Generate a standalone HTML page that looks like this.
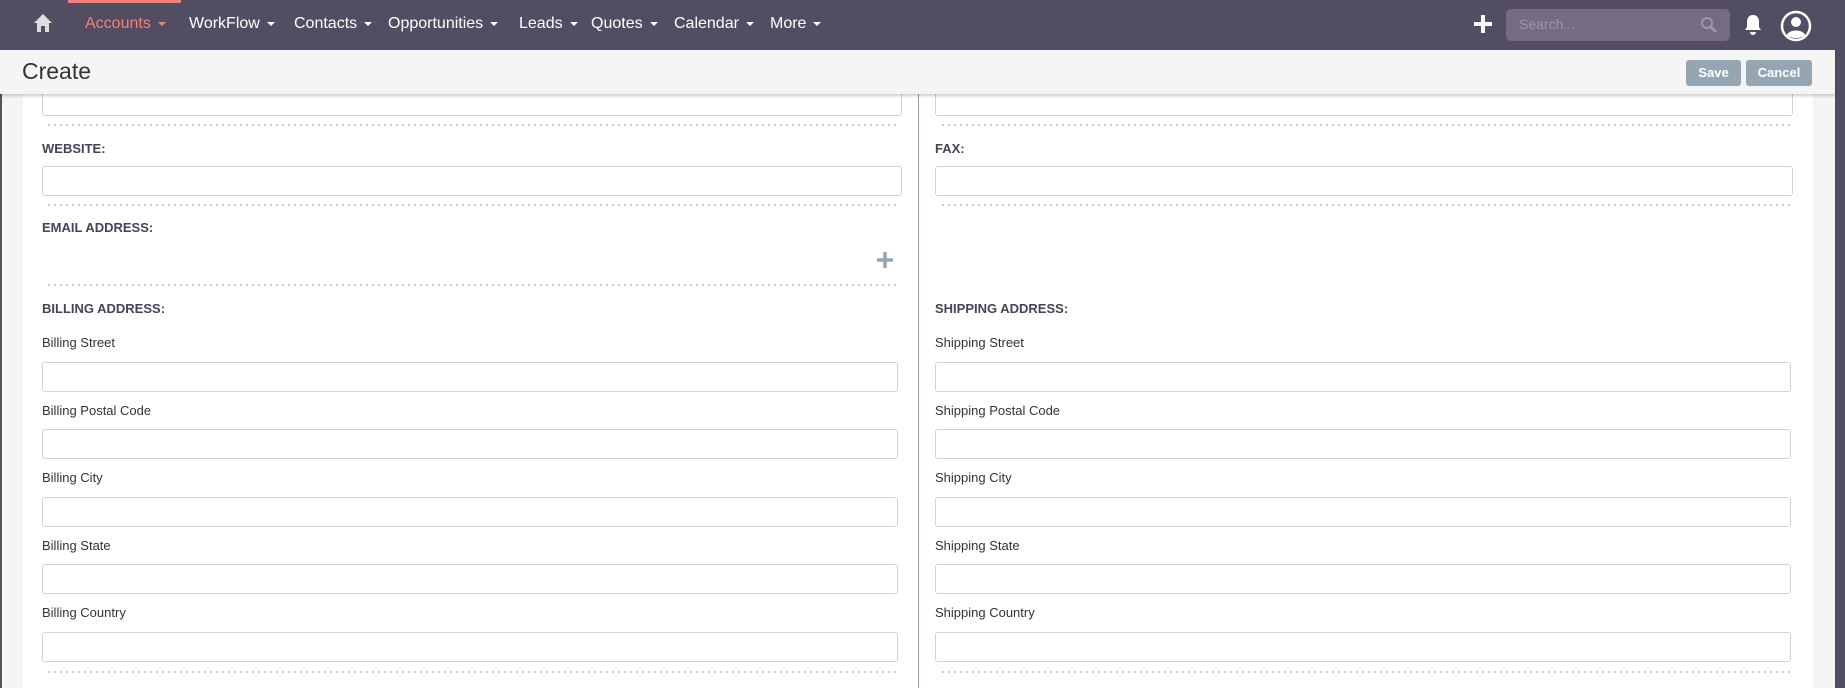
<!DOCTYPE html>
<html><head><meta charset="utf-8"><style>
*{margin:0;padding:0;box-sizing:border-box}
body{width:1845px;height:688px;overflow:hidden;background:#f5f5f5;font-family:"Liberation Sans",sans-serif;position:relative}
.a{position:absolute}
#nav{left:0;top:0;width:1845px;height:50px;background:#534d64}
.ni{position:absolute;top:15px;font-size:16px;color:#fff;white-space:nowrap}
.ni::after{content:"";display:inline-block;margin-left:7px;vertical-align:middle;border-left:4px solid transparent;border-right:4px solid transparent;border-top:4px solid #fff}
.ni.act{color:#f08377}.ni.act::after{border-top-color:#f08377}
#hdr{left:0;top:50px;width:1835px;height:44px;background:#f5f5f5;box-shadow:0 2px 3px rgba(0,0,0,.2);z-index:2}
#panel{left:23px;top:94px;width:1790px;height:594px;background:#fff}
.inp{position:absolute;height:30px;border:1px solid #d0d3d8;border-radius:3px;background:#fff}
.dot{position:absolute;height:2px;background-image:radial-gradient(circle,#b8bcc2 0.8px,transparent 1px);background-size:6px 2px}
.lb{position:absolute;font-size:13px;font-weight:bold;color:#444455}
.sl{position:absolute;font-size:13px;color:#333}
.btn{position:absolute;top:60px;height:26px;background:#95a6b2;color:#fff;font-size:13px;font-weight:bold;border-radius:3px;text-align:center;line-height:26px;z-index:3}
</style></head><body>
<div id="nav" class="a">
 <svg class="a" style="left:33px;top:13px" width="20" height="20" viewBox="0 0 20 20"><path d="M10 1 L19 10 H16 V19 H12 V13 H8 V19 H4 V10 H1 Z" fill="#ddd"/></svg>
 <div class="a" style="left:68px;top:0;width:113px;height:3px;background:#f08377"></div>
 <span class="ni act" style="left:85px">Accounts</span>
 <span class="ni" style="left:189px">WorkFlow</span>
 <span class="ni" style="left:294px">Contacts</span>
 <span class="ni" style="left:388px">Opportunities</span>
 <span class="ni" style="left:519px">Leads</span>
 <span class="ni" style="left:591px">Quotes</span>
 <span class="ni" style="left:674px">Calendar</span>
 <span class="ni" style="left:770px">More</span>
 <svg class="a" style="left:1473px;top:14px" width="20" height="20"><path d="M10 1V19M1 10H19" stroke="#fff" stroke-width="4"/></svg>
 <div class="a" style="left:1506px;top:9px;width:224px;height:32px;background:#736c84;border-radius:5px"></div>
 <span class="a" style="left:1519px;top:16px;font-size:14px;color:#9c96ab">Search...</span>
 <svg class="a" style="left:1700px;top:16px" width="18" height="18"><circle cx="7" cy="7" r="5" stroke="#9c96ab" stroke-width="2" fill="none"/><path d="M11 11L16 16" stroke="#9c96ab" stroke-width="3"/></svg>
 <svg class="a" style="left:1743px;top:14px" width="20" height="22"><path d="M10 1C6 1 4 4 4 8V13L2 16H18L16 13V8C16 4 14 1 10 1Z M7 18 A3 3 0 0 0 13 18Z" fill="#fff"/></svg>
 <svg class="a" style="left:1780px;top:10px" width="32" height="32"><circle cx="16" cy="16" r="14" stroke="#fff" stroke-width="2.5" fill="none"/><circle cx="16" cy="12" r="5" fill="#fff"/><path d="M7 25C9 19 23 19 25 25 21 29 11 29 7 25Z" fill="#fff"/></svg>
</div>
<div class="a" style="left:1835px;top:0;width:10px;height:688px;background:#534d64"></div>
<div class="a" style="left:0;top:50px;width:2px;height:638px;background:#555"></div>
<div id="hdr" class="a"><span class="a" style="left:22px;top:8px;font-size:23px;color:#333">Create</span></div>
<div class="btn" style="left:1686px;width:55px">Save</div>
<div class="btn" style="left:1746px;width:66px">Cancel</div>
<div id="panel" class="a"></div>
<div class="a" style="left:918px;top:94px;width:1px;height:594px;background:#8fa0b0"></div>

<div class="inp" style="left:42px;top:86px;width:860px"></div>
<div class="inp" style="left:935px;top:86px;width:858px"></div>
<div class="dot" style="left:46px;top:124px;width:852px"></div>
<div class="dot" style="left:940px;top:124px;width:852px"></div>

<div class="lb" style="left:42px;top:141px">WEBSITE:</div>
<div class="lb" style="left:935px;top:141px">FAX:</div>
<div class="inp" style="left:42px;top:166px;width:860px"></div>
<div class="inp" style="left:935px;top:166px;width:858px"></div>
<div class="dot" style="left:46px;top:204px;width:852px"></div>
<div class="dot" style="left:940px;top:204px;width:852px"></div>

<div class="lb" style="left:42px;top:220px">EMAIL ADDRESS:</div>
<svg class="a" style="left:876px;top:251px" width="18" height="18"><path d="M9 1V17M1 9H17" stroke="#95a6b2" stroke-width="3.5"/></svg>
<div class="dot" style="left:46px;top:284px;width:852px"></div>

<div class="lb" style="left:42px;top:301px">BILLING ADDRESS:</div>
<div class="lb" style="left:935px;top:301px">SHIPPING ADDRESS:</div>

<div class="sl" style="left:42px;top:335px">Billing Street</div>
<div class="sl" style="left:935px;top:335px">Shipping Street</div>
<div class="inp" style="left:42px;top:362px;width:856px"></div>
<div class="inp" style="left:935px;top:362px;width:856px"></div>
<div class="sl" style="left:42px;top:403px">Billing Postal Code</div>
<div class="sl" style="left:935px;top:403px">Shipping Postal Code</div>
<div class="inp" style="left:42px;top:429px;width:856px"></div>
<div class="inp" style="left:935px;top:429px;width:856px"></div>
<div class="sl" style="left:42px;top:470px">Billing City</div>
<div class="sl" style="left:935px;top:470px">Shipping City</div>
<div class="inp" style="left:42px;top:497px;width:856px"></div>
<div class="inp" style="left:935px;top:497px;width:856px"></div>
<div class="sl" style="left:42px;top:538px">Billing State</div>
<div class="sl" style="left:935px;top:538px">Shipping State</div>
<div class="inp" style="left:42px;top:564px;width:856px"></div>
<div class="inp" style="left:935px;top:564px;width:856px"></div>
<div class="sl" style="left:42px;top:605px">Billing Country</div>
<div class="sl" style="left:935px;top:605px">Shipping Country</div>
<div class="inp" style="left:42px;top:632px;width:856px"></div>
<div class="inp" style="left:935px;top:632px;width:856px"></div>
<div class="dot" style="left:46px;top:671px;width:852px"></div>
<div class="dot" style="left:940px;top:671px;width:852px"></div>
</body></html>
